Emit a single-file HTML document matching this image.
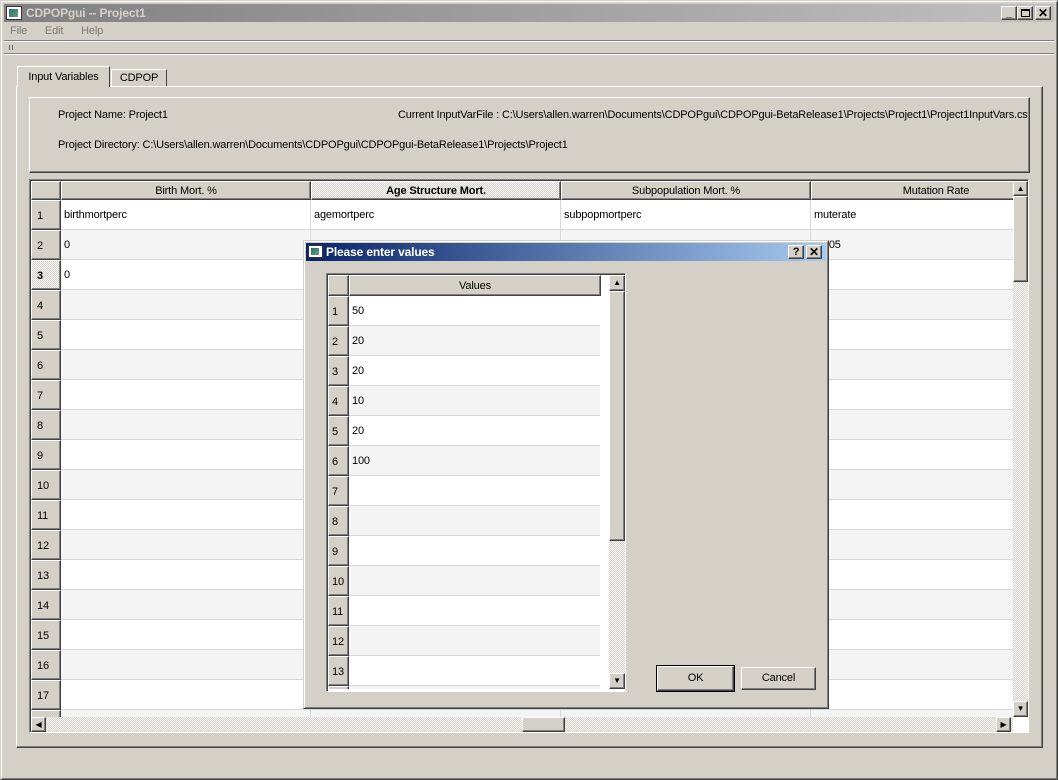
<!DOCTYPE html><html><head><style>
*{margin:0;padding:0;box-sizing:border-box}
body{width:1058px;height:780px;background:#d4d0c8;font-family:"Liberation Sans",sans-serif;font-size:11px;letter-spacing:-0.15px;color:#000;position:relative;overflow:hidden}
.a{position:absolute}
.bev{background:#d4d0c8;border:1px solid;border-color:#fff #404040 #404040 #fff;box-shadow:inset -1px -1px 0 #808080}
.sunk{border:1px solid;border-color:#808080 #fff #fff #808080;box-shadow:inset 1px 1px 0 #404040}
.hd{position:absolute;top:0;height:19px;text-align:center;line-height:18px}
.rh{position:absolute;left:0;width:30px;height:30px;line-height:31px;padding-left:5px}
.row{position:absolute;left:30px;right:0;height:30px;border-bottom:1px solid #d8d8d8}
.c{position:absolute;top:0;height:29px;line-height:31px;padding-left:3px;border-right:1px solid #d8d8d8}
.hatch{background:repeating-conic-gradient(#d4d0c8 0 25%,#fff 0 50%) 0 0/2px 2px}
</style></head><body>
<div class="a" style="left:0;top:0;width:1058px;height:780px;border:1px solid;border-color:#d4d0c8 #404040 #404040 #d4d0c8;box-shadow:inset 1px 1px 0 #fff,inset -1px -1px 0 #808080"></div>
<div class="a" style="left:4px;top:4px;width:1050px;height:18px;background:linear-gradient(90deg,#808080,#c0c0c0)"></div>
<div class="a" style="left:6px;top:6px;width:16px;height:14px;background:#fff;border:1px solid #333"><div style="margin:2px;width:9px;height:8px;background:linear-gradient(135deg,#2a6a80,#6aa070)"></div></div>
<div class="a" style="left:26px;top:5px;color:#d4d0c8;font-weight:bold;font-size:12px;line-height:16px">CDPOPgui -- Project1</div>
<div class="a bev" style="left:1001px;top:6px;width:16px;height:14px;font-weight:bold;text-align:center;line-height:12px">_</div>
<div class="a bev" style="left:1017px;top:6px;width:16px;height:14px"><div style="margin:2px 3px;width:9px;height:8px;border:1px solid #000;border-top-width:2px"></div></div>
<div class="a bev" style="left:1035px;top:6px;width:16px;height:14px;font-weight:bold;text-align:center;line-height:13px;font-size:12px">✕</div>
<div class="a" style="left:10px;top:25px;font-size:11px;color:#7a7a7a;word-spacing:6px">File &nbsp;Edit &nbsp;Help</div>
<div class="a" style="left:4px;top:40px;width:1050px;height:2px;border-top:1px solid #808080;border-bottom:1px solid #fff"></div>
<div class="a" style="left:9px;top:45px;width:4px;height:5px;border-left:1px solid #666;border-right:1px solid #666"></div>
<div class="a" style="left:4px;top:53px;width:1050px;height:2px;border-top:1px solid #808080;border-bottom:1px solid #fff"></div>
<div class="a" style="left:16px;top:86px;width:1027px;height:662px;border:1px solid;border-color:#fff #404040 #404040 #fff;box-shadow:inset -1px -1px 0 #808080"></div>
<div class="a" style="left:17px;top:66px;width:93px;height:21px;background:#d4d0c8;border:1px solid;border-color:#fff #404040 transparent #fff;border-bottom:none;text-align:center;line-height:20px">Input Variables</div>
<div class="a" style="left:111px;top:69px;width:56px;height:17px;border:1px solid;border-color:#fff #404040 transparent #fff;border-bottom:none;text-align:center;line-height:17px">CDPOP</div>
<div class="a" style="left:29px;top:97px;width:1001px;height:76px;border:1px solid;border-color:#fff #404040 #404040 #fff;box-shadow:inset -1px -1px 0 #808080"></div>
<div class="a" style="left:58px;top:109px">Project Name: Project1</div>
<div class="a" style="left:398px;top:109px;white-space:nowrap;width:630px;overflow:hidden">Current InputVarFile : C:\Users\allen.warren\Documents\CDPOPgui\CDPOPgui-BetaRelease1\Projects\Project1\Project1InputVars.csv</div>
<div class="a" style="left:58px;top:139px">Project Directory: C:\Users\allen.warren\Documents\CDPOPgui\CDPOPgui-BetaRelease1\Projects\Project1</div>
<div class="a sunk" style="left:29px;top:179px;width:1000px;height:554px;background:#fff;overflow:hidden">
 <div class="a" style="left:1px;top:1px;width:982px;height:536px;overflow:hidden">
  <div class="hd bev" style="left:0;width:30px"></div>
  <div class="hd bev" style="left:30px;width:250px">Birth Mort. %</div>
  <div class="hd bev hatch" style="left:280px;width:250px;font-weight:bold">Age Structure Mort.</div>
  <div class="hd bev" style="left:530px;width:250px">Subpopulation Mort. %</div>
  <div class="hd bev" style="left:780px;width:250px">Mutation Rate</div>
  <div class="a" style="left:0;top:19px;width:982px;height:540px">
   <div class="rh bev" style="top:0">1</div><div class="row" style="top:0;background:#fff"><div class="c" style="left:0;width:250px">birthmortperc</div><div class="c" style="left:250px;width:250px">agemortperc</div><div class="c" style="left:500px;width:250px">subpopmortperc</div><div class="c" style="left:750px;width:250px">muterate</div></div>
   <div class="rh bev" style="top:30px">2</div><div class="row" style="top:30px;background:#f4f4f4"><div class="c" style="left:0;width:250px">0</div><div class="c" style="left:250px;width:250px"></div><div class="c" style="left:500px;width:250px"></div><div class="c" style="left:750px;width:250px">0.005</div></div>
   <div class="rh bev hatch" style="top:60px;font-weight:bold">3</div><div class="row" style="top:60px;background:#fff"><div class="c" style="left:0;width:250px">0</div><div class="c" style="left:250px;width:250px"></div><div class="c" style="left:500px;width:250px"></div></div>
   <div class="rh bev" style="top:90px">4</div><div class="row" style="top:90px;background:#f4f4f4"><div class="c" style="left:0;width:250px"></div><div class="c" style="left:250px;width:250px"></div><div class="c" style="left:500px;width:250px"></div></div>
   <div class="rh bev" style="top:120px">5</div><div class="row" style="top:120px;background:#fff"><div class="c" style="left:0;width:250px"></div><div class="c" style="left:250px;width:250px"></div><div class="c" style="left:500px;width:250px"></div></div>
   <div class="rh bev" style="top:150px">6</div><div class="row" style="top:150px;background:#f4f4f4"><div class="c" style="left:0;width:250px"></div><div class="c" style="left:250px;width:250px"></div><div class="c" style="left:500px;width:250px"></div></div>
   <div class="rh bev" style="top:180px">7</div><div class="row" style="top:180px;background:#fff"><div class="c" style="left:0;width:250px"></div><div class="c" style="left:250px;width:250px"></div><div class="c" style="left:500px;width:250px"></div></div>
   <div class="rh bev" style="top:210px">8</div><div class="row" style="top:210px;background:#f4f4f4"><div class="c" style="left:0;width:250px"></div><div class="c" style="left:250px;width:250px"></div><div class="c" style="left:500px;width:250px"></div></div>
   <div class="rh bev" style="top:240px">9</div><div class="row" style="top:240px;background:#fff"><div class="c" style="left:0;width:250px"></div><div class="c" style="left:250px;width:250px"></div><div class="c" style="left:500px;width:250px"></div></div>
   <div class="rh bev" style="top:270px">10</div><div class="row" style="top:270px;background:#f4f4f4"><div class="c" style="left:0;width:250px"></div><div class="c" style="left:250px;width:250px"></div><div class="c" style="left:500px;width:250px"></div></div>
   <div class="rh bev" style="top:300px">11</div><div class="row" style="top:300px;background:#fff"><div class="c" style="left:0;width:250px"></div><div class="c" style="left:250px;width:250px"></div><div class="c" style="left:500px;width:250px"></div></div>
   <div class="rh bev" style="top:330px">12</div><div class="row" style="top:330px;background:#f4f4f4"><div class="c" style="left:0;width:250px"></div><div class="c" style="left:250px;width:250px"></div><div class="c" style="left:500px;width:250px"></div></div>
   <div class="rh bev" style="top:360px">13</div><div class="row" style="top:360px;background:#fff"><div class="c" style="left:0;width:250px"></div><div class="c" style="left:250px;width:250px"></div><div class="c" style="left:500px;width:250px"></div></div>
   <div class="rh bev" style="top:390px">14</div><div class="row" style="top:390px;background:#f4f4f4"><div class="c" style="left:0;width:250px"></div><div class="c" style="left:250px;width:250px"></div><div class="c" style="left:500px;width:250px"></div></div>
   <div class="rh bev" style="top:420px">15</div><div class="row" style="top:420px;background:#fff"><div class="c" style="left:0;width:250px"></div><div class="c" style="left:250px;width:250px"></div><div class="c" style="left:500px;width:250px"></div></div>
   <div class="rh bev" style="top:450px">16</div><div class="row" style="top:450px;background:#f4f4f4"><div class="c" style="left:0;width:250px"></div><div class="c" style="left:250px;width:250px"></div><div class="c" style="left:500px;width:250px"></div></div>
   <div class="rh bev" style="top:480px">17</div><div class="row" style="top:480px;background:#fff"><div class="c" style="left:0;width:250px"></div><div class="c" style="left:250px;width:250px"></div><div class="c" style="left:500px;width:250px"></div></div>
   <div class="rh bev" style="top:510px"></div><div class="row" style="top:510px;background:#f4f4f4"><div class="c" style="left:0;width:250px"></div><div class="c" style="left:250px;width:250px"></div><div class="c" style="left:500px;width:250px"></div></div>
  </div>
 </div>
 <div class="a hatch" style="left:983px;top:1px;width:15px;height:536px"></div>
 <div class="a bev" style="left:983px;top:1px;width:15px;height:15px;font-size:8px;text-align:center;line-height:13px">▲</div>
 <div class="a bev" style="left:983px;top:16px;width:15px;height:86px"></div>
 <div class="a bev" style="left:983px;top:521px;width:15px;height:16px;font-size:8px;text-align:center;line-height:14px">▼</div>
 <div class="a hatch" style="left:1px;top:537px;width:982px;height:15px"></div>
 <div class="a bev" style="left:1px;top:537px;width:15px;height:15px;font-size:8px;text-align:center;line-height:13px">◀</div>
 <div class="a bev" style="left:492px;top:537px;width:43px;height:15px"></div>
 <div class="a bev" style="left:966px;top:537px;width:15px;height:15px;font-size:8px;text-align:center;line-height:13px">▶</div>
</div>
<div class="a" style="left:303px;top:240px;width:526px;height:469px;background:#d4d0c8;border:1px solid;border-color:#d4d0c8 #404040 #404040 #d4d0c8;box-shadow:inset 1px 1px 0 #fff,inset -1px -1px 0 #808080"></div>
<div class="a" style="left:306px;top:243px;width:520px;height:18px;background:linear-gradient(90deg,#0a246a,#a6caf0)"></div>
<div class="a" style="left:308px;top:245px;width:15px;height:13px;background:#fff;border:1px solid #333"><div style="margin:2px;width:8px;height:7px;background:linear-gradient(135deg,#2a6a80,#6aa070)"></div></div>
<div class="a" style="left:326px;top:245px;color:#fff;font-weight:bold;font-size:12px;line-height:15px">Please enter values</div>
<div class="a bev" style="left:788px;top:245px;width:16px;height:14px;font-weight:bold;text-align:center;line-height:12px;font-size:11px">?</div>
<div class="a bev" style="left:806px;top:245px;width:16px;height:14px;font-weight:bold;text-align:center;line-height:13px;font-size:12px">✕</div>
<div class="a sunk" style="left:326px;top:273px;width:300px;height:419px;background:#fff;overflow:hidden">
 <div class="a" style="left:1px;top:1px;width:281px;height:414px;overflow:hidden">
  <div class="hd bev" style="left:0;width:21px;height:21px"></div>
  <div class="hd bev" style="left:21px;width:252px;height:21px;line-height:20px">Values</div>
  <div class="a" style="left:0;top:21px;width:272px;height:400px">
   <div class="rh bev" style="top:0;width:21px;padding-left:3px">1</div><div class="row" style="left:21px;top:0;background:#fff"><div class="c" style="left:0;border:0">50</div></div>
   <div class="rh bev" style="top:30px;width:21px;padding-left:3px">2</div><div class="row" style="left:21px;top:30px;background:#f4f4f4"><div class="c" style="left:0;border:0">20</div></div>
   <div class="rh bev" style="top:60px;width:21px;padding-left:3px">3</div><div class="row" style="left:21px;top:60px;background:#fff"><div class="c" style="left:0;border:0">20</div></div>
   <div class="rh bev" style="top:90px;width:21px;padding-left:3px">4</div><div class="row" style="left:21px;top:90px;background:#f4f4f4"><div class="c" style="left:0;border:0">10</div></div>
   <div class="rh bev" style="top:120px;width:21px;padding-left:3px">5</div><div class="row" style="left:21px;top:120px;background:#fff"><div class="c" style="left:0;border:0">20</div></div>
   <div class="rh bev" style="top:150px;width:21px;padding-left:3px">6</div><div class="row" style="left:21px;top:150px;background:#f4f4f4"><div class="c" style="left:0;border:0">100</div></div>
   <div class="rh bev" style="top:180px;width:21px;padding-left:3px">7</div><div class="row" style="left:21px;top:180px;background:#fff"></div>
   <div class="rh bev" style="top:210px;width:21px;padding-left:3px">8</div><div class="row" style="left:21px;top:210px;background:#f4f4f4"></div>
   <div class="rh bev" style="top:240px;width:21px;padding-left:3px">9</div><div class="row" style="left:21px;top:240px;background:#fff"></div>
   <div class="rh bev" style="top:270px;width:21px;padding-left:3px">10</div><div class="row" style="left:21px;top:270px;background:#f4f4f4"></div>
   <div class="rh bev" style="top:300px;width:21px;padding-left:3px">11</div><div class="row" style="left:21px;top:300px;background:#fff"></div>
   <div class="rh bev" style="top:330px;width:21px;padding-left:3px">12</div><div class="row" style="left:21px;top:330px;background:#f4f4f4"></div>
   <div class="rh bev" style="top:360px;width:21px;padding-left:3px">13</div><div class="row" style="left:21px;top:360px;background:#fff"></div>
   <div class="rh bev" style="top:390px;width:21px;padding-left:3px"></div><div class="row" style="left:21px;top:390px;background:#f4f4f4"></div>
  </div>
 </div>
 <div class="a hatch" style="left:282px;top:1px;width:16px;height:414px"></div>
 <div class="a bev" style="left:282px;top:1px;width:16px;height:16px;font-size:8px;text-align:center;line-height:14px">▲</div>
 <div class="a bev" style="left:282px;top:17px;width:16px;height:250px"></div>
 <div class="a bev" style="left:282px;top:399px;width:16px;height:16px;font-size:8px;text-align:center;line-height:14px">▼</div>
</div>
<div class="a bev" style="left:657px;top:666px;width:77px;height:25px;text-align:center;line-height:23px;outline:1px solid #000">OK</div>
<div class="a bev" style="left:741px;top:667px;width:75px;height:23px;text-align:center;line-height:21px">Cancel</div>
</body></html>
